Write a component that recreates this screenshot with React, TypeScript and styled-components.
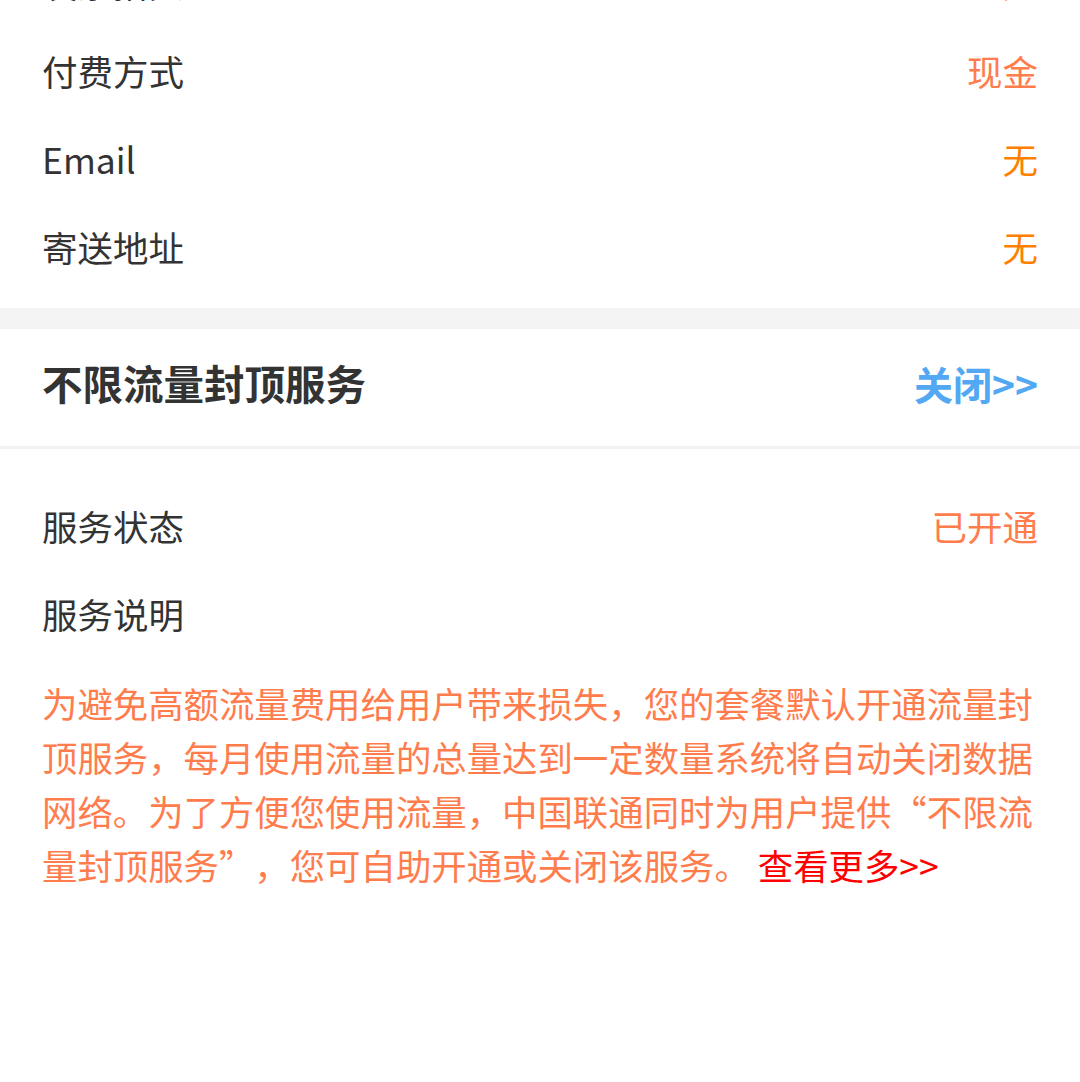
import { FC } from 'react';
import styled, { createGlobalStyle } from 'styled-components';

type Tone = 'coral' | 'orange';

interface InfoRow {
  label: string;
  value: string;
  tone: Tone;
}

const billingRows: InfoRow[] = [
  { label: '发票抬头', value: '无', tone: 'orange' },
  { label: '付费方式', value: '现金', tone: 'coral' },
  { label: 'Email', value: '无', tone: 'orange' },
  { label: '寄送地址', value: '无', tone: 'orange' },
];

const toneColors: Record<Tone, string> = {
  coral: '#ff7c4d',
  orange: '#ff8000',
};

const GlobalStyle = createGlobalStyle`
  html, body {
    margin: 0;
    padding: 0;
    background: #ffffff;
    font-family: 'Noto Sans CJK SC', 'Noto Sans', sans-serif;
    overflow: hidden;
  }
`;

const App: FC = () => {
  return (
    <>
      <GlobalStyle />
      <Styles.page>
        <Styles.infoSection>
          {billingRows.map((row) => (
            <Styles.row key={row.label}>
              <Styles.label>{row.label}</Styles.label>
              <Styles.value tone={row.tone}>{row.value}</Styles.value>
            </Styles.row>
          ))}
        </Styles.infoSection>
        <Styles.band />
        <Styles.card>
          <Styles.cardHeader>
            <Styles.cardTitle>不限流量封顶服务</Styles.cardTitle>
            <Styles.closeLink>关闭&gt;&gt;</Styles.closeLink>
          </Styles.cardHeader>
          <Styles.cardBody>
            <Styles.row>
              <Styles.label>服务状态</Styles.label>
              <Styles.value tone="coral">已开通</Styles.value>
            </Styles.row>
            <Styles.row>
              <Styles.label>服务说明</Styles.label>
            </Styles.row>
            <Styles.description>
              为避免高额流量费用给用户带来损失，您的套餐默认开通流量封顶服务，每月使用流量的总量达到一定数量系统将自动关闭数据网络。为了方便您使用流量，中国联通同时为用户提供“不限流量封顶服务”，您可自助开通或关闭该服务。
              <Styles.moreLink> 查看更多&gt;&gt;</Styles.moreLink>
            </Styles.description>
          </Styles.cardBody>
        </Styles.card>
      </Styles.page>
    </>
  );
};

export default App;

const Styles = {
  page: styled.div`
    width: 1080px;
    height: 1082px;
    overflow: hidden;
    background: #ffffff;
  `,
  infoSection: styled.section`
    margin-top: -62px;
    padding-bottom: 18px;
  `,
  row: styled.div`
    display: flex;
    align-items: center;
    justify-content: space-between;
    height: 88px;
    padding: 0 42px 0 42px;
  `,
  label: styled.span`
    font-size: 35.5px;
    color: #333333;
  `,
  value: styled.span<{ tone: Tone }>`
    font-size: 35.5px;
    color: ${({ tone }) => toneColors[tone]};
  `,
  band: styled.div`
    height: 21px;
    background: #f4f4f4;
  `,
  card: styled.section`
    background: #ffffff;
  `,
  cardHeader: styled.header`
    display: flex;
    align-items: center;
    justify-content: space-between;
    box-sizing: border-box;
    height: 120px;
    padding: 0 42px 10px 42px;
    border-bottom: 3px solid #f2f2f2;
  `,
  cardTitle: styled.h2`
    margin: 0;
    font-size: 40.5px;
    font-weight: 700;
    color: #333333;
  `,
  closeLink: styled.span`
    font-size: 39px;
    font-weight: 700;
    color: #52a8f2;
  `,
  cardBody: styled.div`
    padding-top: 32px;
  `,
  description: styled.p`
    margin: 19px 0 0;
    padding: 0 40px 0 42px;
    font-size: 35.4px;
    line-height: 54px;
    color: #ff7c4d;
    text-spacing-trim: space-all;
  `,
  moreLink: styled.span`
    color: #ff0000;
  `,
};
